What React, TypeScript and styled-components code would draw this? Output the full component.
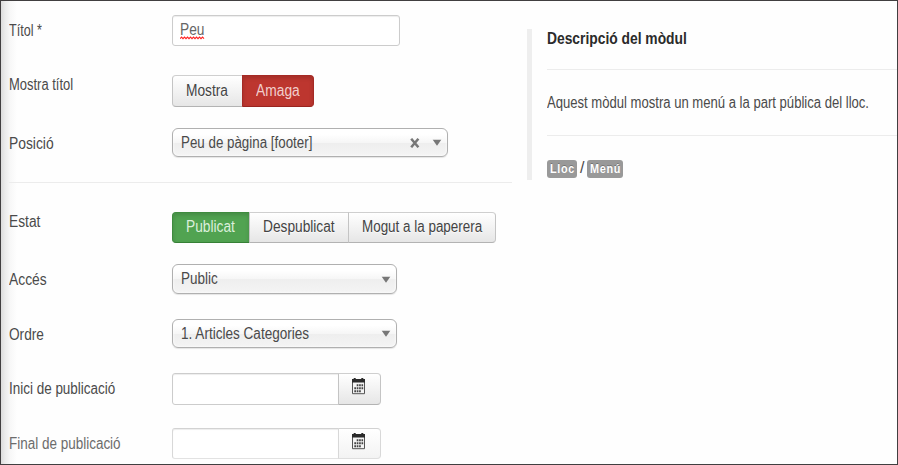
import React, { useLayoutEffect, useRef, useState } from "react";
import styled, { createGlobalStyle, css } from "styled-components";

const GlobalStyle = createGlobalStyle`
  * { box-sizing: border-box; }
  body { margin: 0; background: #fff; overflow: hidden; }
`;

const Frame = styled.main`
  position: relative;
  width: 898px;
  height: 465px;
  border: 1px solid #413f40;
  background: linear-gradient(to right, #dcdcdc 0, #ebebeb 4px, #f7f7f7 9px, #fefefe 16px, #fefefe 100%);
  display: flex;
  align-items: flex-start;
  overflow: hidden;
  font-family: "Liberation Sans", Arial, sans-serif;
  font-size: 16px;
  line-height: 20px;
  color: #4a4a4a;
`;

const Form = styled.form`
  width: 503px;
  margin-left: 8px;
  padding-top: 14px;
  display: flex;
  flex-direction: column;
`;

const Row = styled.div<{ $h: number; $gap: number }>`
  display: flex;
  align-items: flex-start;
  height: ${(p) => p.$h}px;
  margin-bottom: ${(p) => p.$gap}px;
`;

const Label = styled.label<{ $top: number }>`
  width: 163px;
  flex: none;
  padding-top: ${(p) => p.$top}px;
`;

const Rule = styled.hr`
  width: 100%;
  height: 1px;
  margin: 0;
  border: 0;
  background: #ececec;
`;

const FormRule = styled(Rule)`
  margin-bottom: 29px;
`;

const FitBox = styled.span<{ $w: number }>`
  display: inline-block;
  vertical-align: top;
  width: ${(p) => p.$w}px;
  white-space: nowrap;
`;

const FitInner = styled.span`
  display: inline-block;
  vertical-align: top;
  transform-origin: 0 0;
`;

/* Condensed text: squeezes the line to the given width. */
function Fit({ w, children }: { w: number; children: string }) {
  const ref = useRef<HTMLSpanElement>(null);
  const [scale, setScale] = useState(1);
  useLayoutEffect(() => {
    if (ref.current) setScale(w / ref.current.offsetWidth);
  }, [w, children]);
  return (
    <FitBox $w={w}>
      <FitInner ref={ref} style={{ transform: `scaleX(${scale})` }}>
        {children}
      </FitInner>
    </FitBox>
  );
}

const TextField = styled.div`
  position: relative;
  width: 228px;
  height: 31px;
  padding: 4px 0 0 7px;
  border: 1px solid #ccc;
  border-radius: 3px;
  background: #fff;
  box-shadow: inset 0 1px 1px rgba(0, 0, 0, 0.075);
  color: #666;
`;

const Squiggle = styled.svg`
  position: absolute;
  left: 7px;
  top: 20px;
`;

const ButtonGroup = styled.div`
  display: flex;
  height: 100%;
`;

type Tone = "plain" | "red" | "green";

const tones = {
  plain: css`
    color: #444;
    border-color: #cfcfcf #c4c4c4 #b3b3b3;
    background: linear-gradient(#fff, #e6e6e6);
    text-shadow: 0 1px 1px rgba(255, 255, 255, 0.75);
  `,
  red: css`
    color: #f1cfcd;
    border-color: #a52a25 #a52a25 #99241f;
    background: #bd362f;
    box-shadow: inset 0 2px 4px rgba(0, 0, 0, 0.15);
  `,
  green: css`
    color: #dcefdc;
    border-color: #3f8b3f #3f8b3f #368036;
    background: #51a351;
    box-shadow: inset 0 2px 4px rgba(0, 0, 0, 0.15);
  `,
};

const GroupButton = styled.button<{ $tone: Tone; $w: number }>`
  width: ${(p) => p.$w}px;
  height: 100%;
  padding: 0 0 1px 13px;
  border: 1px solid;
  display: flex;
  align-items: center;
  font: inherit;
  ${(p) => tones[p.$tone]}
  &:first-child {
    border-radius: 4px 0 0 4px;
  }
  &:last-child {
    border-radius: 0 4px 4px 0;
  }
  &:not(:first-child) {
    margin-left: -1px;
  }
`;

const Select = styled.div<{ $w: number }>`
  width: ${(p) => p.$w}px;
  height: 100%;
  padding: 0 5px 0 8px;
  display: flex;
  align-items: center;
  border: 1px solid #b0b0b0;
  border-radius: 6px;
  background: linear-gradient(#fff 20%, #f6f6f6 50%, #eee 52%, #f4f4f4 100%);
  box-shadow: inset 0 0 3px #fff, 0 1px 1px rgba(0, 0, 0, 0.1);
`;

const SelectIcons = styled.span`
  margin-left: auto;
  display: flex;
  align-items: center;
  gap: 12px;
  svg {
    display: block;
  }
`;

const DateField = styled.div<{ $faded?: boolean }>`
  width: 209px;
  height: 100%;
  display: flex;
  --edge: ${(p) => (p.$faded ? "#d2d2d2 #d8d8d8 #e2e2e2" : "#ccc")};
  --button-edge: ${(p) => (p.$faded ? "#d2d2d2 #d8d8d8 #dedede" : "#cfcfcf #c4c4c4 #b3b3b3")};
  --button-end: ${(p) => (p.$faded ? "#f3f3f3" : "#e6e6e6")};
`;

const DateInput = styled.div`
  width: 167px;
  height: 100%;
  border: 1px solid;
  border-color: var(--edge);
  border-radius: 3px 0 0 3px;
  background: #fff;
  box-shadow: inset 0 1px 1px rgba(0, 0, 0, 0.075);
`;

const DateButton = styled.button`
  width: 43px;
  height: 100%;
  margin-left: -1px;
  padding: 4px 0 0 13px;
  display: flex;
  align-items: flex-start;
  border: 1px solid;
  border-color: var(--button-edge);
  border-radius: 0 4px 4px 0;
  background: linear-gradient(#fff, var(--button-end));
  svg {
    display: block;
    flex: none;
  }
`;

const FadedLabel = styled(Label)`
  color: #6c6c6c;
`;

const Aside = styled.aside`
  flex: 1;
  height: 151px;
  margin: 28px 0 0 15px;
  border-left: 5px solid #eee;
  padding-left: 15px;
  display: flex;
  flex-direction: column;
`;

const Heading = styled.h4`
  margin: 0;
  height: 40px;
  font-size: 16px;
  line-height: 20px;
  color: #2b2b2b;
`;

const Description = styled.p`
  margin: 0;
  height: 65px;
  padding-top: 23px;
`;

const Tags = styled.div`
  display: flex;
  padding-top: 24px;
`;

const Badge = styled.span<{ $w: number }>`
  width: ${(p) => p.$w}px;
  height: 18px;
  padding-left: 3px;
  border-radius: 3px;
  background: #999;
  color: #fff;
  font-size: 13px;
  font-weight: bold;
  letter-spacing: 0.8px;
  line-height: 18px;
  text-shadow: 0 -1px 0 rgba(0, 0, 0, 0.25);
`;

const Slash = styled.span`
  width: 10px;
  padding-left: 3px;
  line-height: 16px;
`;

const Caret = () => (
  <svg width="10" height="7" viewBox="0 0 10 7">
    <path d="M.7.8h8.6L5 6.7z" fill="#777" />
  </svg>
);

const Clear = () => (
  <svg width="10" height="10" viewBox="0 0 10 10">
    <path d="M1.2.8l7.2 8.4M8.4.8L1.2 9.2" stroke="#777" strokeWidth="2.5" />
  </svg>
);

const CalendarIcon = () => (
  <svg width="13" height="17" viewBox="0 0 13 17">
    <path d="M.5 3.5h12v12.2H.5z" fill="#f4f4f4" stroke="#555" />
    <path d="M0 1h1.7V0h2v1h5.6V0h2v1H13v3.4H0z" fill="#2b2b2b" />
    <path
      d="M4.7 7.3h6.4M2.3 10.3h9.1M2.3 13.3h6.8"
      stroke="#444" strokeWidth="2" strokeDasharray="1.7 .7"
    />
  </svg>
);

export default function App() {
  return (
    <>
      <GlobalStyle />
      <Frame>
        <Form>
          <Row $h={31} $gap={29}>
            <Label $top={6}><Fit w={33}>Títol *</Fit></Label>
            <TextField>
              <Fit w={24}>Peu</Fit>
              <Squiggle width="25" height="4" viewBox="0 0 25 4">
                <path
                  d="M0 2.7l1.5-1.6L3 2.7l1.5-1.6L6 2.7l1.5-1.6L9 2.7l1.5-1.6L12 2.7l1.5-1.6L15 2.7l1.5-1.6L18 2.7l1.5-1.6L21 2.7l1.5-1.6L24 2.7"
                  fill="none" stroke="#f22" strokeWidth="1.1"
                />
              </Squiggle>
            </TextField>
          </Row>
          <Row $h={32} $gap={21}>
            <Label $top={0}><Fit w={64}>Mostra títol</Fit></Label>
            <ButtonGroup>
              <GroupButton type="button" $tone="plain" $w={71}><Fit w={42}>Mostra</Fit></GroupButton>
              <GroupButton type="button" $tone="red" $w={72}><Fit w={44}>Amaga</Fit></GroupButton>
            </ButtonGroup>
          </Row>
          <Row $h={29} $gap={25}>
            <Label $top={6}><Fit w={45}>Posició</Fit></Label>
            <Select $w={276}>
              <Fit w={131}>Peu de pàgina [footer]</Fit>
              <SelectIcons><Clear /><Caret /></SelectIcons>
            </Select>
          </Row>
          <FormRule />
          <Row $h={31} $gap={21}>
            <Label $top={0}><Fit w={31}>Estat</Fit></Label>
            <ButtonGroup>
              <GroupButton type="button" $tone="green" $w={78}><Fit w={49}>Publicat</Fit></GroupButton>
              <GroupButton type="button" $tone="plain" $w={100}><Fit w={72}>Despublicat</Fit></GroupButton>
              <GroupButton type="button" $tone="plain" $w={148}><Fit w={120}>Mogut a la paperera</Fit></GroupButton>
            </ButtonGroup>
          </Row>
          <Row $h={30} $gap={25}>
            <Label $top={6}><Fit w={38}>Accés</Fit></Label>
            <Select $w={225}>
              <Fit w={37}>Public</Fit>
              <SelectIcons><Caret /></SelectIcons>
            </Select>
          </Row>
          <Row $h={29} $gap={25}>
            <Label $top={6}><Fit w={35}>Ordre</Fit></Label>
            <Select $w={225}>
              <Fit w={128}>1. Articles Categories</Fit>
              <SelectIcons><Caret /></SelectIcons>
            </Select>
          </Row>
          <Row $h={32} $gap={23}>
            <Label $top={6}><Fit w={106}>Inici de publicació</Fit></Label>
            <DateField>
              <DateInput />
              <DateButton type="button"><CalendarIcon /></DateButton>
            </DateField>
          </Row>
          <Row $h={31} $gap={0}>
            <FadedLabel $top={6}><Fit w={112}>Final de publicació</Fit></FadedLabel>
            <DateField $faded>
              <DateInput />
              <DateButton type="button"><CalendarIcon /></DateButton>
            </DateField>
          </Row>
        </Form>
        <Aside>
          <Heading><Fit w={140}>Descripció del mòdul</Fit></Heading>
          <Rule />
          <Description><Fit w={322}>Aquest mòdul mostra un menú a la part pública del lloc.</Fit></Description>
          <Rule />
          <Tags>
            <Badge $w={30}><Fit w={25}>Lloc</Fit></Badge>
            <Slash><Fit w={4}>/</Fit></Slash>
            <Badge $w={36}><Fit w={31}>Menú</Fit></Badge>
          </Tags>
        </Aside>
      </Frame>
    </>
  );
}
